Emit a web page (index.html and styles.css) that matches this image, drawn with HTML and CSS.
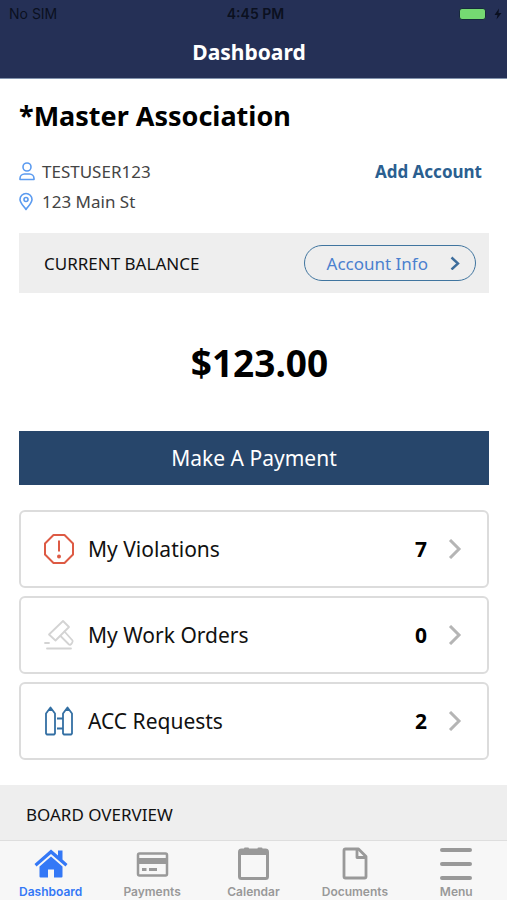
FILE: index.html
```html
<!DOCTYPE html>
<html lang="en">
<head>
<meta charset="utf-8">
<meta name="viewport" content="width=device-width, initial-scale=1">
<title>Dashboard</title>
<link rel="stylesheet" href="styles.css">
</head>
<body>
<div class="app">
  <header class="header">
    <div class="status">
      <span class="carrier">No SIM</span>
      <span class="clock">4:45 PM</span>
      <span class="power">
        <span class="battery"></span>
        <svg width="8" height="12" viewBox="0 0 8 12"><path d="M5 0.5 0.5 7H3.5L2.5 11.5 7.5 5H4.5Z" fill="#0b1020"/></svg>
      </span>
    </div>
    <h1 class="title">Dashboard</h1>
  </header>

  <main class="content">
    <section class="account">
      <h2 class="association">*Master Association</h2>
      <div class="identity">
        <ul class="details">
          <li>
            <svg width="16" height="20" viewBox="0 0 16 20" fill="none" stroke="#5b9bf0" stroke-width="1.6"><circle cx="8" cy="5" r="4"/><path d="M1 17.500V16.500C1 14 3 12 5.500 12H10.500C13 12 15 14 15 16.500V17.500Z" stroke-linejoin="round"/></svg>
            TESTUSER123
          </li>
          <li>
            <svg width="16" height="20" viewBox="0 0 16 20" fill="none" stroke="#5b9bf0" stroke-width="1.6"><path d="M7 17.500C5 14.500 1 11 1 7.500A6 6 0 0 1 13 7.500C13 11 9 14.500 7 17.500Z" stroke-linejoin="round"/><circle cx="7" cy="7.500" r="2"/></svg>
            123 Main St
          </li>
        </ul>
        <a class="add" href="#add">Add Account</a>
      </div>

      <div class="balance-bar">
        <span>CURRENT BALANCE</span>
        <button class="info" type="button">Account Info
          <svg width="10" height="14" viewBox="0 0 10 14" fill="none" stroke="#3d6d9c" stroke-width="2.4"><path d="M1.500 1.500 8 7.500 1.500 13.500"/></svg>
        </button>
      </div>
      <p class="balance">$123.00</p>
      <button class="pay" type="button">Make A Payment</button>

      <nav class="cards" aria-label="Account items">
        <a class="card" href="#violations">
          <svg class="card-icon" width="32" height="32" viewBox="0 0 32 32" fill="none" stroke="#dd5a44" stroke-width="2"><path d="M10.500 2H21.500L30 10.500V21.500L21.500 30H10.500L2 21.500V10.500Z" stroke-linejoin="round"/><path d="M16 7.500V18.500"/><circle cx="16" cy="23.500" r="2" fill="#dd5a44" stroke="none"/></svg>
          <span class="card-label">My Violations</span>
          <span class="count">7</span>
          <svg class="chevron" width="14" height="20" viewBox="0 0 14 20"><path d="M2 1 11 10 2 19"/></svg>
        </a>
        <a class="card" href="#orders">
          <svg class="card-icon" width="32" height="32" viewBox="0 0 32 32" fill="none" stroke="#d3d3d3" stroke-width="1.800" stroke-linecap="round" stroke-linejoin="round"><path d="M20 2 26 8 12.500 21.500 6 15.500Z"/><path d="M21.500 12.500 29.500 21.500Q30 22.500 29 24Q27.500 26.500 26 25.500L17.500 17"/><path d="M2 24H6M4 29.500H28"/></svg>
          <span class="card-label">My Work Orders</span>
          <span class="count">0</span>
          <svg class="chevron" width="14" height="20" viewBox="0 0 14 20"><path d="M2 1 11 10 2 19"/></svg>
        </a>
        <a class="card" href="#requests">
          <svg class="card-icon" width="32" height="32" viewBox="0 0 32 32" fill="none" stroke="#336fa3" stroke-width="1.800" stroke-linejoin="round"><path d="M7.500 2.500 12 8.500V28.500L11 29.500H4L3 28.500V8.500Z"/><path d="M24.500 2.500 29 8.500V28.500L28 29.500H21L20 28.500V8.500Z"/><path d="M14 13.500H20M14 23.500H20"/><path d="M7.500 2.500 10 6H5ZM24.500 2.500 27 6H22Z" fill="#336fa3" stroke="none"/></svg>
          <span class="card-label">ACC Requests</span>
          <span class="count">2</span>
          <svg class="chevron" width="14" height="20" viewBox="0 0 14 20"><path d="M2 1 11 10 2 19"/></svg>
        </a>
      </nav>
    </section>
    <h2 class="overview">BOARD OVERVIEW</h2>
  </main>

  <nav class="tabs" aria-label="Main">
    <a class="tab active" href="#dashboard">
      <svg width="34" height="36" viewBox="0 0 34 36" fill="#3478f6"><path d="M17 3.500 24 9.500V4.500H28.500V13.500L33.500 18 31.500 20.500 17 8 2.500 20.500 0.500 18Z"/><path d="M17 10.500 28.500 20.500V30.500Q28.500 31.500 27.500 31.500H20V23.500H14V31.500H6.500Q5.500 31.500 5.500 30.500V20.500Z"/></svg>
      Dashboard
    </a>
    <a class="tab" href="#payments">
      <svg width="34" height="36" viewBox="0 0 34 36" fill="none" stroke="#999" stroke-width="2.500"><rect x="3" y="7.500" width="29" height="22" rx="1.500"/><path d="M3 15H31" stroke-width="6"/><path d="M7 23.500H11.500M14 23.500H22" stroke-width="3"/></svg>
      Payments
    </a>
    <a class="tab" href="#calendar">
      <svg width="34" height="36" viewBox="0 0 34 36" fill="none" stroke="#999" stroke-width="3"><rect x="3.500" y="4" width="28" height="28.500" rx="2"/><path d="M3.500 6H31.500" stroke-width="6"/><path d="M9 2.500H12M22.500 2.500H25.500" stroke-width="2" stroke-linecap="round"/></svg>
      Calendar
    </a>
    <a class="tab" href="#documents">
      <svg width="34" height="36" viewBox="0 0 34 36" fill="none" stroke="#999" stroke-width="2.800" stroke-linejoin="round"><path d="M6 4.500Q6 3 7.500 3H20.500L28 10.500V30.500Q28 32 26.500 32H7.500Q6 32 6 30.500Z"/><path d="M19 3V11.500H28"/></svg>
      Documents
    </a>
    <a class="tab" href="#menu">
      <svg width="34" height="36" viewBox="0 0 34 36" fill="none" stroke="#999" stroke-width="4" stroke-linecap="round"><path d="M3 4H31M3 18H31M3 32H31"/></svg>
      Menu
    </a>
  </nav>
</div>
</body>
</html>
```
FILE: styles.css
```css
* { box-sizing: border-box; }

body {
  margin: 0;
  background: #fff;
  color: #111;
  font-family: "Noto Sans", sans-serif;
}

a { color: inherit; text-decoration: none; }
button { font: inherit; cursor: pointer; }
svg { display: block; flex: none; }

.app {
  display: flex;
  flex-direction: column;
  height: 100vh;
}

.header {
  flex: none;
  background: #253056;
  border-bottom: 1px solid #8293ad;
}

.status {
  display: grid;
  grid-template-columns: 1fr auto 1fr;
  align-items: center;
  height: 28px;
  padding: 0 5px 0 9px;
  color: #0b1020;
  font: 14px/20px Inter, sans-serif;
}

.clock { font-weight: 600; }

.power {
  display: flex;
  align-items: center;
  justify-content: flex-end;
  gap: 8px;
}

.battery {
  width: 27px;
  height: 12px;
  border: 1px solid #172a3c;
  border-radius: 3px;
  background: #75d972;
}

.title {
  margin: 0;
  padding: 0 9px 2px 0;
  color: #fff;
  font-size: 21px;
  line-height: 48px;
  font-weight: 700;
  text-align: center;
}

.content {
  flex: 1;
  min-height: 0;
  overflow-y: auto;
  scrollbar-width: none;
}

.account { padding: 17px 18px 25px 19px; }

.association {
  margin: 0 0 21px;
  color: #000;
  font-size: 27px;
  line-height: 40px;
}

.identity {
  display: flex;
  align-items: flex-start;
  justify-content: space-between;
  padding-right: 7px;
  line-height: 30px;
}

.details {
  margin: 0;
  padding: 0;
  list-style: none;
  color: #444;
  font-size: 17px;
}

.details li {
  display: flex;
  align-items: center;
  gap: 7px;
}

.add {
  color: #2b5f90;
  font-size: 17px;
  font-weight: 700;
}

.balance-bar {
  display: flex;
  align-items: center;
  justify-content: space-between;
  height: 60px;
  margin-top: 16px;
  padding: 0 13px 0 25px;
  background: #eee;
  font-size: 17px;
}

.info {
  display: flex;
  align-items: center;
  gap: 22px;
  height: 36px;
  padding: 0 15px 0 22px;
  border: 1px solid #40759f;
  border-radius: 18px;
  background: none;
  color: #4a80cf;
  font-size: 17px;
}

.balance {
  margin: 0;
  padding: 39px 0 38px 11px;
  color: #000;
  font-size: 37px;
  line-height: 61px;
  font-weight: 700;
  text-align: center;
}

.pay {
  width: 100%;
  height: 54px;
  border: 0;
  background: #27466b;
  color: #fff;
  font-size: 21px;
}

.cards {
  display: grid;
  gap: 8px;
  margin-top: 25px;
}

.card {
  display: flex;
  align-items: center;
  height: 78px;
  padding: 0 25px 0 22px;
  border: 2px solid #dcdcdc;
  border-radius: 6px;
  font-size: 21px;
}

.card-icon { margin-right: 13px; }
.card-label { flex: 1; }

.count {
  margin-right: 21px;
  color: #000;
  font-weight: 700;
}

.chevron {
  fill: none;
  stroke: #b5b5b5;
  stroke-width: 3;
}

.overview {
  margin: 0;
  padding: 0 26px;
  background: #eee;
  font-size: 17px;
  line-height: 60px;
  font-weight: 400;
}

.tabs {
  display: grid;
  flex: none;
  grid-template-columns: repeat(5, 1fr);
  height: 60px;
  padding: 5px 0 0;
  border-top: 1px solid #dedede;
  background: #f7f7f7;
}

.tab {
  display: flex;
  flex-direction: column;
  align-items: center;
  color: #999;
  font: 600 12px/20px Inter, sans-serif;
}

.active { color: #3478f6; }
```
